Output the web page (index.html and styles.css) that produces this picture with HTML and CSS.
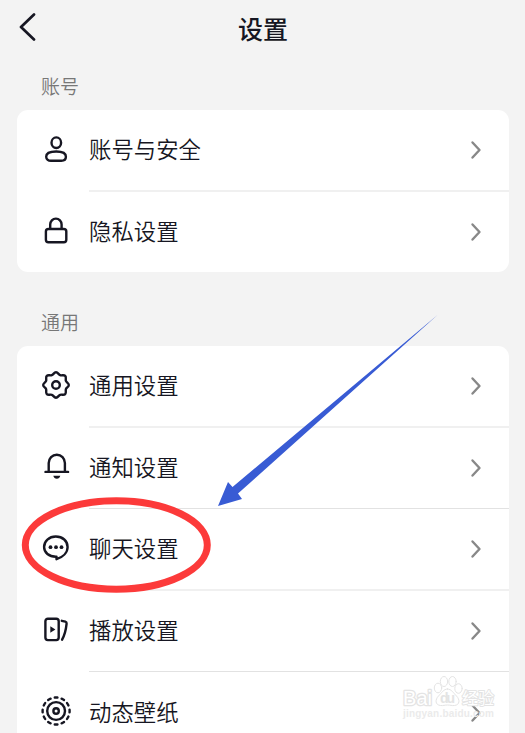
FILE: index.html
```html
<!DOCTYPE html>
<html lang="zh-CN">
<head>
    <meta charset="UTF-8">
    <meta name="viewport" content="width=device-width, initial-scale=1.0">
    <title>设置</title>
    <link rel="stylesheet" href="styles.css">
</head>
<body>

    <div class="page">
        <!-- 顶部标题栏 -->
        <header class="header">
            <svg class="back" viewBox="0 0 20 30"><path d="M17 1.500 4 14l13 12.500"/></svg>
            <h1>设置</h1>
        </header>

        <!-- 账号 -->
        <h2 class="group-title">账号</h2>
        <div class="card">
            <div class="item">
                <svg class="icon" viewBox="0 0 32 32">
                    <ellipse cx="16.300" cy="8.700" rx="4.800" ry="5.300"/>
                    <path d="M16.200 17.500c6 0 9.700 1.800 9.700 5.200 0 2.800-2.100 4-4.600 4H10.900c-2.500 0-4.700-1.200-4.700-4 0-3.400 4-5.200 10-5.200z"/>
                </svg>
                <div class="content"><span>账号与安全</span><svg class="arrow" viewBox="0 0 12 20"><path d="m2.500 2.500 7 7.500-7 7.500"/></svg></div>
            </div>
            <div class="item">
                <svg class="icon" viewBox="0 0 32 32">
                    <rect x="5.900" y="13" width="20.400" height="13.300" rx="2.500"/>
                    <path d="M10.200 12.700V8.600a5.700 6 0 0 1 11.400 0v4.100"/>
                </svg>
                <div class="content"><span>隐私设置</span><svg class="arrow" viewBox="0 0 12 20"><path d="m2.500 2.500 7 7.500-7 7.500"/></svg></div>
            </div>
        </div>

        <!-- 通用 -->
        <h2 class="group-title">通用</h2>
        <div class="card">
            <div class="item">
                <svg class="icon" viewBox="0 0 32 32">
                    <path d="M16 2.300c2 0 2.600 2.300 4.200 2.900s3.600-.7 5 .7.100 3.400.7 5 2.900 2.100 2.900 4.100-2.300 2.500-2.900 4.100.7 3.600-.7 5-3.400.1-5 .7-2.200 2.900-4.200 2.900-2.600-2.300-4.200-2.900-3.600.7-5-.7-.1-3.400-.7-5-2.900-2.100-2.900-4.100 2.300-2.500 2.900-4.100-.7-3.600.7-5 3.400-.1 5-.7 2.200-2.900 4.200-2.900z"/>
                    <circle cx="16" cy="15" r="3.800"/>
                </svg>
                <div class="content"><span>通用设置</span><svg class="arrow" viewBox="0 0 12 20"><path d="m2.500 2.500 7 7.500-7 7.500"/></svg></div>
            </div>
            <div class="item">
                <svg class="icon" viewBox="0 0 32 32">
                    <path d="M8.700 19.700v-8.600a8.100 8.400 0 0 1 16.200 0v8.600M5.500 19.900h22.600"/>
                    <path class="solid" d="M13.300 23.800h7c-.5 2-1.700 3-3.500 3s-3-1-3.500-3z"/>
                </svg>
                <div class="content"><span>通知设置</span><svg class="arrow" viewBox="0 0 12 20"><path d="m2.500 2.500 7 7.500-7 7.500"/></svg></div>
            </div>
            <div class="item">
                <svg class="icon" viewBox="0 0 32 32">
                    <path d="M15.800 3.500c6.800 0 11.800 4.500 11.800 10.400 0 5.700-4.900 10.300-11.100 12.300v-2.400h-.7C9 23.800 4.100 19.700 4.100 13.900S9 3.500 15.800 3.500z"/>
                    <g class="solid">
                        <circle cx="10.500" cy="14.200" r="1.900"/>
                        <circle cx="16" cy="14.200" r="1.900"/>
                        <circle cx="21.500" cy="14.200" r="1.900"/>
                    </g>
                </svg>
                <div class="content"><span>聊天设置</span><svg class="arrow" viewBox="0 0 12 20"><path d="m2.500 2.500 7 7.500-7 7.500"/></svg></div>
            </div>
            <div class="item">
                <svg class="icon" viewBox="0 0 32 32">
                    <rect x="5.400" y="3.700" width="13.300" height="21.400" rx="2.500"/>
                    <path class="solid" d="m10.300 11.200 5.100 3.300-5.100 3.300z"/>
                    <path d="m21.800 5.800 3.600.9c1 .3 1.300 1 1.200 2-.6 5.800-1.800 11.200-4.500 16"/>
                </svg>
                <div class="content"><span>播放设置</span><svg class="arrow" viewBox="0 0 12 20"><path d="m2.500 2.500 7 7.500-7 7.500"/></svg></div>
            </div>
            <div class="item">
                <svg class="icon" viewBox="0 0 32 32">
                    <circle class="dashes" cx="16.100" cy="15" r="13.500" pathLength="120"/>
                    <circle cx="16.100" cy="15" r="8.900"/>
                    <circle cx="16.100" cy="15" r="2.700"/>
                </svg>
                <div class="content"><span>动态壁纸</span><svg class="arrow" viewBox="0 0 12 20"><path d="m2.500 2.500 7 7.500-7 7.500"/></svg></div>
            </div>
        </div>

        <!-- 标注：红圈和箭头 -->
        <svg class="marks" viewBox="0 0 525 733">
            <ellipse class="ring" cx="116.300" cy="545" rx="91" ry="44.200"/>
            <path class="pointer" d="M218 506l10-24 4.500 5L437.500 315 238 493.500l4 5.500z"/>
        </svg>

        <!-- 水印 -->
        <svg class="watermark" viewBox="0 0 100 50">
            <g class="paw">
                <ellipse cx="38" cy="17" rx="3.700" ry="4.800"/>
                <ellipse cx="44" cy="10.500" rx="3.700" ry="5"/>
                <ellipse cx="52.500" cy="10.500" rx="3.700" ry="5"/>
                <ellipse cx="58.500" cy="17.500" rx="3.700" ry="4.800"/>
                <path d="M47.500 18c4 0 6 4 9 7 3.500 3.500 3.500 9-2 9.500-3 .3-4-.5-7-.5s-4 .8-7 .5c-5.500-.5-5.500-6-2-9.500 3-3 5-7 9-7z"/>
            </g>
            <text class="wm-name" x="3" y="33.500" textLength="29">Bai</text>
            <text class="wm-du" x="40" y="32" textLength="15">du</text>
            <text class="wm-name wm-cn" x="62" y="33" textLength="32">经验</text>
            <text class="wm-url" x="3" y="46" textLength="91">jingyan.baidu.com</text>
        </svg>
    </div>

</body>
</html>
```
FILE: styles.css
```css
* {
    box-sizing: border-box;
}
body {
    margin: 0;
    background-color: #f3f3f3;
    color: #161622;
    font-family: "Noto Sans CJK SC", sans-serif;
}
.page {
    position: relative;
    height: 733px;
    padding: 0 16px 0 17px;
    overflow: hidden;
}
svg {
    display: block;
    flex: none;
    fill: none;
    stroke: currentColor;
    stroke-width: 2.4;
    stroke-linecap: round;
    stroke-linejoin: round;
}
.header {
    display: flex;
    align-items: center;
    height: 55px;
}
.back {
    width: 20px;
    height: 30px;
    stroke-width: 2.7;
}
.header h1 {
    flex: 1;
    margin: 0 20px 0 0;
    font-size: 25px;
    font-weight: 500;
    line-height: 36px;
    text-align: center;
}
.group-title {
    height: 55px;
    margin: 0;
    padding: 16px 24px 0;
    color: #777;
    font-size: 19px;
    font-weight: 350;
    line-height: 30px;
}
.card {
    border-radius: 11px;
    background-color: #fff;
}
.card + .group-title {
    height: 74px;
    padding-top: 35px;
}
.item {
    display: flex;
    height: 81.5px;
    padding-left: 23px;
}
.card:first-of-type .item:last-child {
    height: 80.5px;
}
.icon {
    width: 32px;
    height: 32px;
    margin: 24px 17px 0 0;
}
.content {
    display: flex;
    flex: 1;
    align-items: center;
    justify-content: space-between;
    padding-right: 27.5px;
    border-bottom: 2px solid #f0f0f0;
    font-size: 22.4px;
    font-weight: 350;
    line-height: 32px;
}
.content span {
    padding-bottom: 3px;
}
.item:nth-child(even) .content {
    border-bottom: 1px solid #e2e2e2;
}
.item:last-child .content {
    border-bottom: none;
}
.arrow {
    width: 12px;
    height: 20px;
    color: #888;
}
.solid {
    fill: currentColor;
    stroke: none;
}
.dashes {
    stroke-dasharray: 4 6;
    stroke-dashoffset: 2;
}
.marks {
    position: absolute;
    top: 0;
    left: 0;
    width: 525px;
    height: 733px;
}
.ring {
    stroke: #fc3a3a;
    stroke-width: 7;
}
.pointer {
    fill: #385bd4;
    stroke: none;
}
.watermark {
    position: absolute;
    top: 671px;
    left: 400px;
    width: 100px;
    height: 50px;
    stroke: #e4e4e4;
    stroke-width: 1;
    font-family: "Liberation Sans", "Noto Sans CJK SC", sans-serif;
}
.paw {
    fill: #fff;
}
.wm-name {
    fill: #fff;
    stroke-width: 2.6;
    paint-order: stroke;
    font-size: 20px;
}
.wm-cn {
    stroke-width: 2;
    font-size: 16px;
}
.wm-du {
    fill: #e4e4e4;
    stroke: none;
    font-size: 14px;
    font-weight: 700;
}
.wm-url {
    fill: #ebebeb;
    stroke: none;
    font-size: 10px;
    font-weight: 700;
}
```
